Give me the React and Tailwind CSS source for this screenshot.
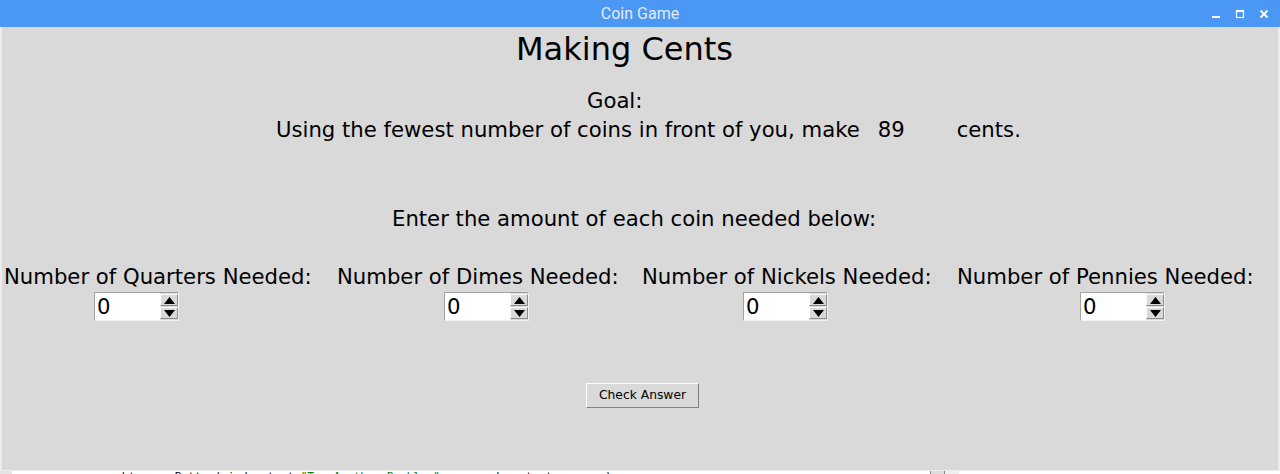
import React from "react";

function Spinbox({ ml }) {
  return (
    <div
      className="flex h-[29px] w-[85px] border border-t-[#a3a3a3] border-l-[#a3a3a3] border-r-[#f2f2f2] border-b-[#f2f2f2] bg-white"
      style={{ marginLeft: ml }}
    >
      <div className="flex-1 pl-[2px] leading-[27px] text-[21.2px] text-black">0</div>
      <div className="flex w-[18px] flex-col gap-[1px] bg-[#d9d9d9] py-[1px]">
        <div className="flex flex-1 items-center justify-center border border-t-white border-l-white border-r-[#8a8a8a] border-b-[#8a8a8a] bg-[#d9d9d9]">
          <svg width="11" height="7" viewBox="0 0 11 7">
            <polygon points="5.5,0 11,7 0,7" fill="#000" />
          </svg>
        </div>
        <div className="flex flex-1 items-center justify-center border border-t-white border-l-white border-r-[#8a8a8a] border-b-[#8a8a8a] bg-[#d9d9d9]">
          <svg width="11" height="7" viewBox="0 0 11 7">
            <polygon points="0,0 11,0 5.5,7" fill="#000" />
          </svg>
        </div>
      </div>
    </div>
  );
}

export default function App() {
  const cols = [
    { w: 333, label: "Number of Quarters Needed:", ml: 90 },
    { w: 305, label: "Number of Dimes Needed:", ml: 107 },
    { w: 315, label: "Number of Nickels Needed:", ml: 101 },
    { w: 320, label: "Number of Pennies Needed:", ml: 123 },
  ];
  return (
    <div className="relative h-[474px] w-[1280px] overflow-hidden bg-white font-['DejaVu_Sans',sans-serif] text-black">
      {/* title bar */}
      <div className="grid h-[27px] grid-cols-[1fr_auto_1fr] items-center bg-[#4a97f4]">
        <div />
        <div className="font-['Roboto',sans-serif] text-[16px] leading-[27px] text-[#e3ebf9]">Coin Game</div>
        <div className="flex items-center justify-end gap-[14px] pr-[11px]">
          <svg width="10" height="10" viewBox="0 0 10 10">
            <rect x="1" y="7" width="8" height="2" fill="#fff" />
          </svg>
          <svg width="10" height="10" viewBox="0 0 10 10">
            <rect x="1.5" y="1.5" width="7" height="7" fill="none" stroke="#fff" strokeWidth="1.2" />
            <rect x="1" y="1" width="8" height="2" fill="#fff" />
          </svg>
          <svg width="10" height="10" viewBox="0 0 10 10">
            <path d="M1.5 1.5 L8.5 8.5 M8.5 1.5 L1.5 8.5" stroke="#fff" strokeWidth="2" />
          </svg>
        </div>
      </div>

      {/* window body */}
      <div className="flex h-[444px] flex-col border-x-2 border-b border-x-[#ececec] border-b-[#ececec] bg-[#d9d9d9]">
        <div className="mt-[4px] pl-[514px] text-[32px] leading-[37px]">Making Cents</div>
        <div className="mt-[20px] pl-[585px] text-[21.2px] leading-[25px]">Goal:</div>
        <div className="mt-[4px] flex text-[21.2px] leading-[25px]">
          <span className="pl-[274px]">Using the fewest number of coins in front of you, make</span>
          <span className="pl-[18px]">89</span>
          <span className="pl-[52px]">cents.</span>
        </div>
        <div className="mt-[64px] pl-[390px] text-[21.2px] leading-[25px]">
          Enter the amount of each coin needed below:
        </div>
        <div className="mt-[33px] flex pl-[2px]">
          {cols.map((c) => (
            <div key={c.label} className="flex flex-col" style={{ width: c.w }}>
              <div className="whitespace-nowrap text-[21.2px] leading-[25px]">{c.label}</div>
              <div className="mt-[3px]">
                <Spinbox ml={c.ml} />
              </div>
            </div>
          ))}
        </div>
        <div className="mt-[62px] pl-[584px]">
          <div className="flex h-[25px] w-[113px] items-center justify-center border border-t-white border-l-white border-r-[#7f7f7f] border-b-[#7f7f7f] bg-[#d9d9d9] text-[12.3px]">
            Check Answer
          </div>
        </div>
      </div>

      {/* background editor peeking below */}
      <div className="flex h-[3px] overflow-hidden">
        <div className="w-[12px] bg-[#e4e4e4]" />
        <div className="relative flex-1 bg-white">
          <div className="absolute left-[90px] top-[-1px] whitespace-pre font-['DejaVu_Sans_Mono',monospace] text-[11px] leading-[14px]">
            <span className="text-[#000080]">newbtn </span>
            <span className="text-[#000]">    Button(window,text=</span>
            <span className="text-[#008000]">"Try Another Problem"</span>
            <span className="text-[#000]">, command=restart_program)</span>
          </div>
          <div className="absolute left-[918px] top-0 h-[3px] w-[15px] border-x border-[#888] bg-[#ddd]" />
          <div className="absolute left-[933px] top-0 h-[3px] w-[14px] bg-[#eee]" />
        </div>
      </div>
    </div>
  );
}
